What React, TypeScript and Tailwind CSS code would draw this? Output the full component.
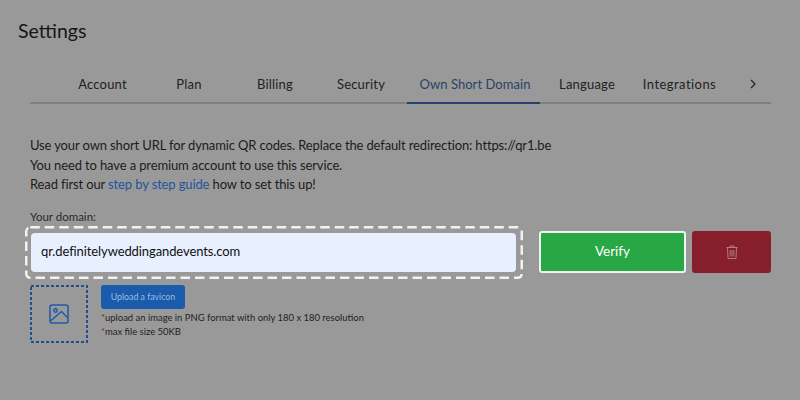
import React from "react";

const tabs = [
  { label: "Account", w: "w-[87px]" },
  { label: "Plan", w: "w-[86px]" },
  { label: "Billing", w: "w-[86px]" },
  { label: "Security", w: "w-[86px]" },
];

export default function App() {
  return (
    <div className="w-[800px] h-[400px] overflow-hidden bg-[#999999] font-['Lato','Open_Sans',sans-serif] text-[#1a1a1a] pt-[18px] pl-[18px]">
      <h1 className="text-[19.5px] leading-[26px] font-normal text-[#161616]">Settings</h1>
      <div className="ml-[12px] w-[741px] mt-[21px]">
        <div className="flex h-[39px] pl-[29px] border-b-2 border-[#808080] text-[13px] tracking-[0.2px] text-[#222222]">
          {tabs.map((t) => (
            <div key={t.label} className={`${t.w} h-[39px] flex items-center justify-center`}>
              {t.label}
            </div>
          ))}
          <div className="ml-[3px] w-[133px] h-[39px] pt-[2px] pl-[3px] flex items-center justify-center border-b-2 border-[#24426e] text-[#2a4268] tracking-[0.05px] whitespace-nowrap">
            Own Short Domain
          </div>
          <div className="ml-[7px] w-[80px] h-[39px] flex items-center justify-center">Language</div>
          <div className="w-[105px] h-[39px] flex items-center justify-center tracking-[0.45px]">Integrations</div>
          <div className="ml-[17px] h-[37px] flex items-center">
            <svg width="8" height="10" viewBox="0 0 8 10" fill="none" stroke="#222222" strokeWidth="1.2">
              <path d="M2 1l4 4-4 4" />
            </svg>
          </div>
        </div>
        <div className="mt-[32px] text-[13px] tracking-[-0.13px] leading-[19.5px] text-[#1c1c1c]">
          <p>Use your own short URL for dynamic QR codes. Replace the default redirection: https://qr1.be</p>
          <p>You need to have a premium account to use this service.</p>
          <p>
            Read first our <span className="text-[#1f55a0]">step by step guide</span> how to set this up!
          </p>
        </div>
        <div className="mt-[14px] text-[11.5px] leading-[16px] text-[#2a2a2a]">Your domain:</div>
        <div className="mt-[1px] flex items-start">
          <div className="relative -ml-[5px] w-[498px] h-[53px] pt-[7px] pl-[6px] pr-[7px]">
            <div className="h-[39px] rounded-[4px] bg-[#e8efff] flex items-center pl-[10px] text-[13px] tracking-[-0.1px] text-[#111111]">
              qr.definitelyweddingandevents.com
            </div>
            <svg className="absolute left-0 top-0" width="498" height="53" fill="none">
              <rect x="1.25" y="1.25" width="495.5" height="50.5" rx="4" stroke="#f2f2f2" strokeWidth="2.5" strokeDasharray="9.5 5" />
            </svg>
          </div>
          <button className="ml-[16px] mt-[5px] w-[147px] h-[42px] rounded-[3px] border-2 border-[#eef5ef] bg-[#28a745] text-white text-[13.5px] flex items-center justify-center">
            Verify
          </button>
          <button className="ml-[6px] mt-[5px] w-[79px] h-[42px] rounded-[3px] bg-[#861f2b] flex items-center justify-center">
            <svg width="12" height="14" viewBox="0 0 12 14" fill="none" stroke="#b07a82" strokeWidth="1">
              <path d="M0.5 2.5h11M4 2.5V1h4v1.5M1.5 2.5l.5 11h8l.5-11M4.2 5v6.5M6 5v6.5M7.8 5v6.5" />
            </svg>
          </button>
        </div>
        <div className="mt-[6px] flex items-start">
          <div className="relative w-[58px] h-[58px] flex items-center justify-center">
            <svg className="absolute left-0 top-0" width="58" height="58" fill="none">
              <rect x="1" y="1" width="56" height="56" stroke="#1f4f8f" strokeWidth="2" strokeDasharray="3 2" />
            </svg>
            <svg width="20" height="20" viewBox="0 0 20 20" fill="none" stroke="#1e5aa8" strokeWidth="1.5" strokeLinejoin="round">
              <rect x="1" y="1" width="18" height="18" rx="2" />
              <circle cx="6.5" cy="6.5" r="1.7" />
              <path d="M1.5 17l11-9.5 6 6" />
            </svg>
          </div>
          <div className="ml-[13px]">
            <button className="w-[84px] h-[24px] rounded-[3px] bg-[#1a5cab] text-[#9dbbe0] text-[8.8px] flex items-center justify-center">
              Upload a favicon
            </button>
            <p className="text-[9.45px] leading-[14px] mt-[2px] text-[#222222]">
              <span className="text-[#8a1f2b]">*</span>upload an image in PNG format with only 180 x 180 resolution
            </p>
            <p className="text-[9.45px] leading-[14px] text-[#222222]">
              <span className="text-[#8a1f2b]">*</span>max file size 50KB
            </p>
          </div>
        </div>
      </div>
    </div>
  );
}
